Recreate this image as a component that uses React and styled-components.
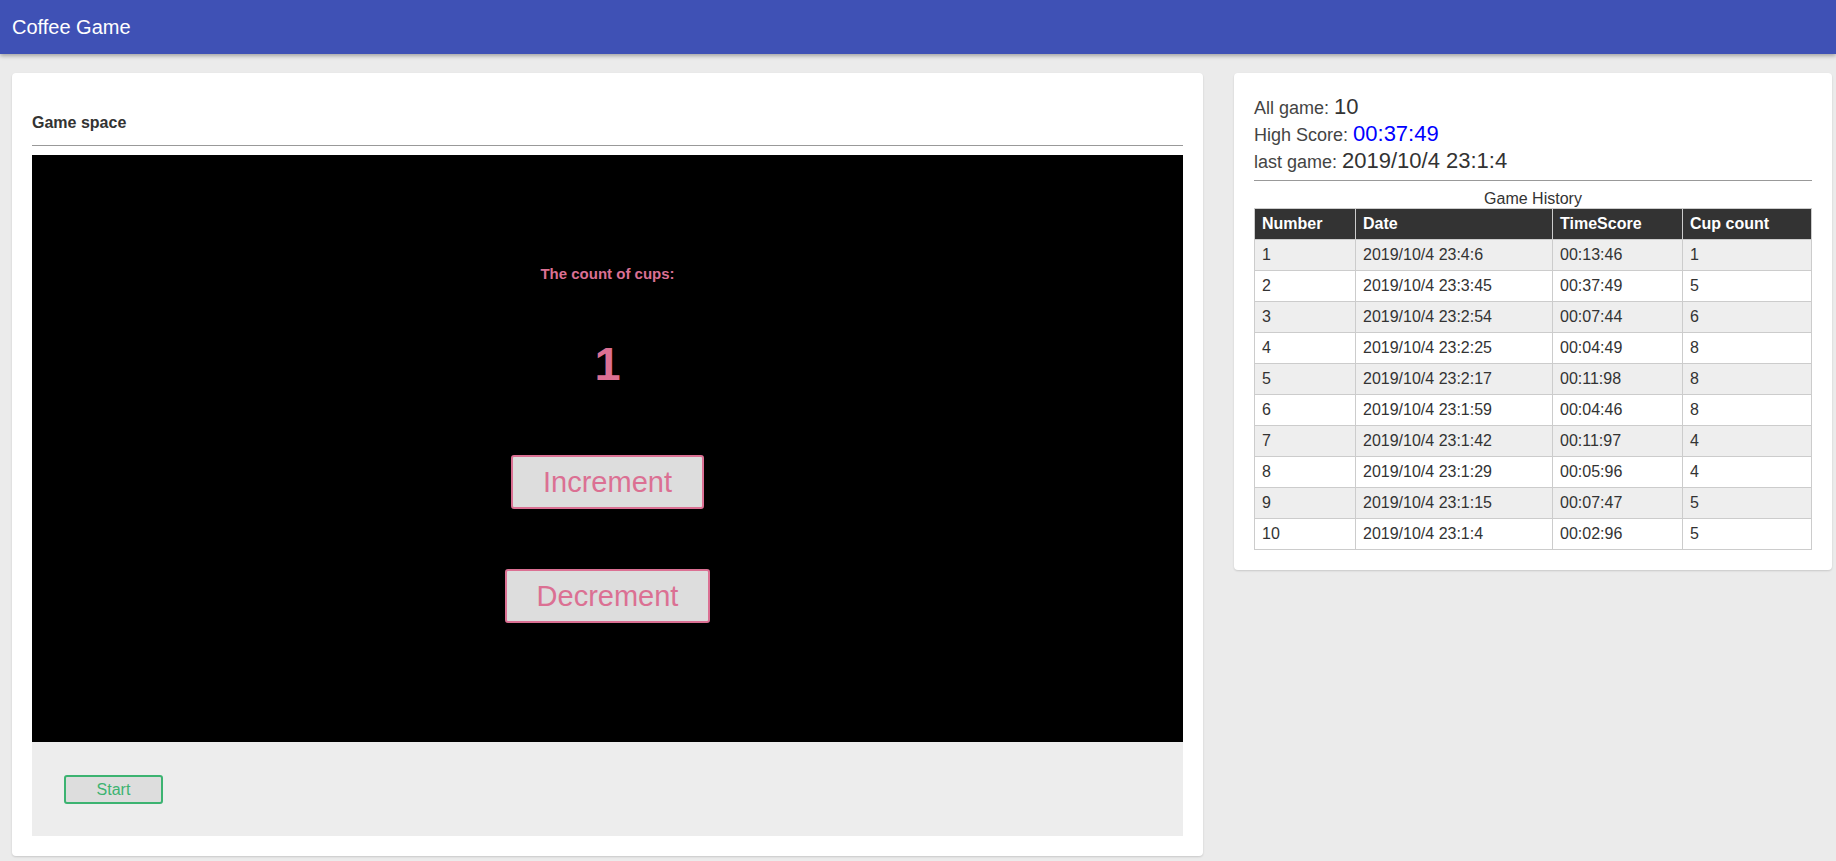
import React, { useState } from "react";
import styled, { createGlobalStyle } from "styled-components";

const GlobalStyle = createGlobalStyle`
  html, body {
    margin: 0;
    padding: 0;
    background-color: #ebebeb;
    font-family: "Liberation Sans", Arial, sans-serif;
    color: #333;
  }
`;

const Page = styled.div`
  min-height: 861px;
  background-color: #ebebeb;
`;

const TopBar = styled.header`
  height: 54px;
  display: flex;
  align-items: center;
  padding: 0 12px;
  background-color: #3f51b5;
  color: #fff;
  font-size: 20px;
  box-shadow: 0 2px 4px rgba(0, 0, 0, 0.3);
  position: relative;
`;

const Content = styled.main`
  display: flex;
  align-items: flex-start;
  gap: 31px;
  padding: 19px 4px 0 12px;
`;

const Card = styled.section`
  background-color: #fff;
  border-radius: 4px;
  box-shadow: 0 1px 2px rgba(0, 0, 0, 0.15);
  padding: 20px;
  box-sizing: border-box;
  width: ${props => props.width}px;
`;

const CardTitle = styled.h3`
  margin: 21px 0 13px;
  font-size: 16px;
  line-height: 18px;
  font-weight: bold;
  color: #333;
`;

const Rule = styled.hr`
  border: none;
  border-top: 1px solid #999;
  margin: ${props => props.space};
`;

const Screen = styled.div`
  height: 587px;
  box-sizing: border-box;
  padding-bottom: 8px;
  background-color: #000;
  display: flex;
  flex-direction: column;
  align-items: center;
  justify-content: center;
  color: palevioletred;
`;

const CountLabel = styled.div`
  font-size: 15px;
  line-height: 16px;
  font-weight: bold;
  margin-bottom: 54px;
`;

const CountValue = styled.div`
  font-size: 47px;
  line-height: 55px;
  font-weight: bold;
  margin-bottom: 64px;
`;

const GameButton = styled.button`
  font-family: "Liberation Sans", Arial, sans-serif;
  font-size: 29px;
  line-height: 36px;
  padding: 7px 30px;
  background-color: #ddd;
  color: palevioletred;
  border: 2px solid palevioletred;
  border-radius: 3px;
  margin-bottom: ${props => props.gap || 0}px;
`;

const Controls = styled.div`
  height: 94px;
  background-color: #ededed;
  display: flex;
  align-items: center;
  padding: 0 32px;
`;

const StartButton = styled.button`
  font-family: "Liberation Sans", Arial, sans-serif;
  font-size: 16px;
  line-height: 19px;
  width: 99px;
  height: 29px;
  padding: 0;
  background-color: #ddd;
  color: mediumseagreen;
  border: 2px solid mediumseagreen;
  border-radius: 3px;
`;

const Stats = styled.div`
  padding-top: 1px;
`;

const StatLine = styled.div`
  font-size: 18px;
  line-height: 26px;
  color: #444;
  span {
    font-size: 22px;
    color: ${props => props.accent || "#333"};
  }
`;

const History = styled.table`
  width: 100%;
  border-collapse: collapse;
  font-size: 16px;
  caption {
    line-height: 18px;
    color: #333;
  }
  th, td {
    border: 1px solid #ccc;
    padding: 6px 7px;
    line-height: 18px;
    text-align: left;
  }
  th {
    background-color: #333;
    color: #fff;
    font-weight: bold;
  }
  tbody tr:nth-child(odd) {
    background-color: #eee;
  }
  td {
    color: #333;
  }
`;

const columns = [
  { label: "Number", width: 101 },
  { label: "Date", width: 197 },
  { label: "TimeScore", width: 130 },
  { label: "Cup count", width: 129 },
];

const games = [
  [1, "2019/10/4 23:4:6", "00:13:46", 1],
  [2, "2019/10/4 23:3:45", "00:37:49", 5],
  [3, "2019/10/4 23:2:54", "00:07:44", 6],
  [4, "2019/10/4 23:2:25", "00:04:49", 8],
  [5, "2019/10/4 23:2:17", "00:11:98", 8],
  [6, "2019/10/4 23:1:59", "00:04:46", 8],
  [7, "2019/10/4 23:1:42", "00:11:97", 4],
  [8, "2019/10/4 23:1:29", "00:05:96", 4],
  [9, "2019/10/4 23:1:15", "00:07:47", 5],
  [10, "2019/10/4 23:1:4", "00:02:96", 5],
];

const App = () => {
  const [cups, setCups] = useState(1);

  return (
    <Page>
      <GlobalStyle />
      <TopBar>Coffee Game</TopBar>
      <Content>
        <Card width={1191}>
          <CardTitle>Game space</CardTitle>
          <Rule space="0 0 9px" />
          <Screen>
            <CountLabel>The count of cups:</CountLabel>
            <CountValue>{cups}</CountValue>
            <GameButton gap={60} onClick={() => setCups(cups + 1)}>Increment</GameButton>
            <GameButton onClick={() => setCups(Math.max(0, cups - 1))}>Decrement</GameButton>
          </Screen>
          <Controls>
            <StartButton>Start</StartButton>
          </Controls>
        </Card>
        <Card width={598}>
          <Stats>
            <StatLine>All game: <span>10</span></StatLine>
            <StatLine accent="blue">High Score: <span>00:37:49</span></StatLine>
            <StatLine>last game: <span>2019/10/4 23:1:4</span></StatLine>
          </Stats>
          <Rule space="5px 0 9px" />
          <History>
            <caption>Game History</caption>
            <colgroup>
              {columns.map(col => (
                <col key={col.label} style={{ width: col.width }} />
              ))}
            </colgroup>
            <thead>
              <tr>
                {columns.map(col => (
                  <th key={col.label}>{col.label}</th>
                ))}
              </tr>
            </thead>
            <tbody>
              {games.map(game => (
                <tr key={game[0]}>
                  {game.map((cell, i) => (
                    <td key={i}>{cell}</td>
                  ))}
                </tr>
              ))}
            </tbody>
          </History>
        </Card>
      </Content>
    </Page>
  );
};

export default App;
